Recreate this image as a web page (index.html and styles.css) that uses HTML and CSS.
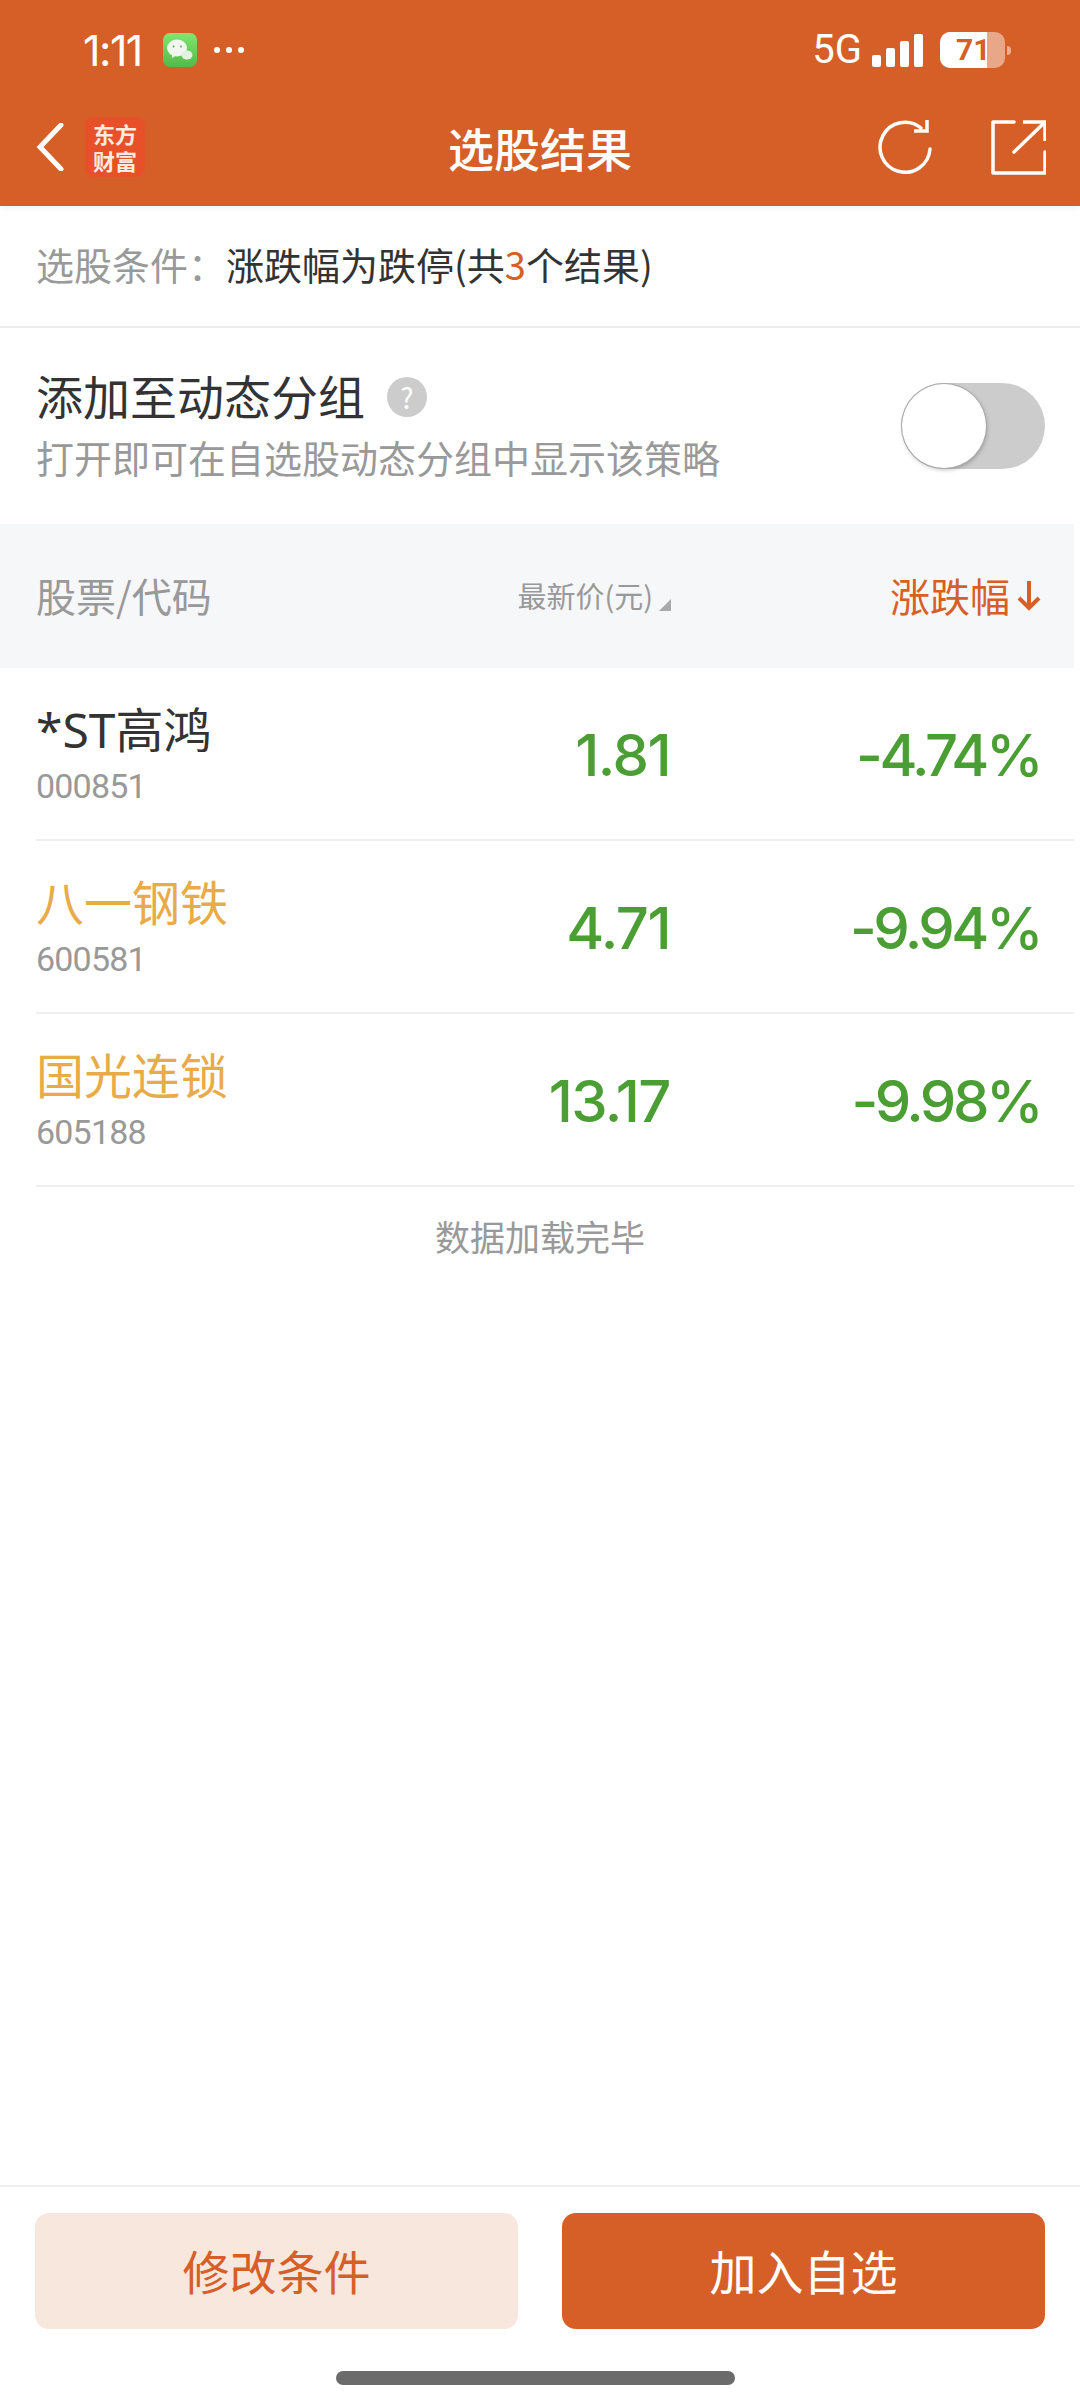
FILE: index.html
```html
<!DOCTYPE html>
<html lang="zh-CN">
<head>
<meta charset="utf-8">
<title>选股结果</title>
<link rel="stylesheet" href="styles.css">
</head>
<body>
<div class="app">
  <header class="header">
    <div class="status">
      <div class="status-left">
        <span class="time">1:11</span>
        <span class="wechat">
          <svg viewBox="0 0 34 34" width="34" height="34"><defs><linearGradient id="wg" x1="0" y1="0" x2="0" y2="1"><stop offset="0" stop-color="#7fe86f"/><stop offset="1" stop-color="#55b848"/></linearGradient></defs><rect width="34" height="34" rx="7" fill="url(#wg)"/><ellipse cx="14" cy="15" rx="10" ry="8.500" fill="#f1f6ee"/><path d="M9 21l0 4 5-3z" fill="#f1f6ee"/><ellipse cx="24" cy="22" rx="5.500" ry="4.600" fill="#e6f0e2"/><circle cx="10.500" cy="13.500" r="1" fill="#5aa850"/><circle cx="18" cy="13.500" r="1" fill="#5aa850"/></svg>
        </span>
        <span class="dots"><i></i><i></i><i></i></span>
      </div>
      <div class="status-right">
        <span class="net">5G</span>
        <span class="signal"><i class="s1"></i><i class="s2"></i><i class="s3"></i><i class="s4"></i></span>
        <span class="battery"><span class="battery-fill"></span><span class="battery-num">71</span></span>
        <span class="battery-tip"></span>
      </div>
    </div>
    <nav class="nav">
      <div class="nav-left">
        <svg class="back" viewBox="0 0 28 48" width="28" height="48"><path d="M25 2 L4 24 L25 46" fill="none" stroke="#fff" stroke-width="5" stroke-linecap="round" stroke-linejoin="miter"/></svg>
        <div class="logo"><span>东方</span><span>财富</span></div>
      </div>
      <h1 class="title">选股结果</h1>
      <div class="nav-right">
        <svg viewBox="0 0 56 56" width="56" height="56"><path d="M53 30 A25 25 0 1 1 44 9" fill="none" stroke="#fff" stroke-width="3.500" stroke-linecap="round"/><path d="M50 1 V12 H37" fill="none" stroke="#fff" stroke-width="3.500"/></svg>
        <svg viewBox="0 0 56 56" width="56" height="56"><path d="M24 3 H3 V54 H55 V33" fill="none" stroke="#fff" stroke-width="3.500" stroke-linejoin="round" stroke-linecap="round"/><path d="M33 3 H55 V22" fill="none" stroke="#fff" stroke-width="3.500"/><path d="M54 4 L24 33" fill="none" stroke="#fff" stroke-width="3.500" stroke-linecap="round"/></svg>
      </div>
    </nav>
  </header>

  <section class="cond">
    <span class="cond-label">选股条件：</span><span class="cond-text">涨跌幅为跌停(共<em>3</em>个结果)</span>
  </section>

  <section class="group">
    <div class="group-info">
      <div class="group-title"><span>添加至动态分组</span><span class="help">?</span></div>
      <div class="group-sub">打开即可在自选股动态分组中显示该策略</div>
    </div>
    <div class="switch"><span class="knob"></span></div>
  </section>

  <div class="thead">
    <span class="c-name">股票/代码</span>
    <span class="c-price">最新价(元)<i class="corner"></i></span>
    <span class="c-chg">涨跌幅<svg viewBox="0 0 26 32" width="26" height="32"><path d="M13 2 V29 M3 19 L13 29 L23 19" fill="none" stroke="#d65f28" stroke-width="4"/></svg></span>
  </div>

  <main class="list">
    <div class="row">
      <div class="c-name"><div class="name">*ST高鸿</div><div class="code">000851</div></div>
      <div class="c-price num">1.81</div>
      <div class="c-chg num">-4.74%</div>
    </div>
    <div class="row">
      <div class="c-name"><div class="name hl">八一钢铁</div><div class="code">600581</div></div>
      <div class="c-price num">4.71</div>
      <div class="c-chg num">-9.94%</div>
    </div>
    <div class="row">
      <div class="c-name"><div class="name hl">国光连锁</div><div class="code">605188</div></div>
      <div class="c-price num">13.17</div>
      <div class="c-chg num">-9.98%</div>
    </div>
    <div class="done">数据加载完毕</div>
  </main>

  <footer class="footer">
    <div class="btns">
      <button class="btn btn-light">修改条件</button>
      <button class="btn btn-main">加入自选</button>
    </div>
    <div class="home"></div>
  </footer>
</div>
</body>
</html>
```
FILE: styles.css
```css
* { box-sizing: border-box; margin: 0; padding: 0; }
html, body { width: 1080px; height: 2400px; background: #fff; overflow: hidden; }
body { font-family: "Noto Sans CJK SC", "Noto Sans", sans-serif; }
.app { width: 1080px; height: 2400px; display: flex; flex-direction: column; }

.header { height: 206px; background: #d65f28; color: #fff; flex: none; box-shadow: 0 2px 6px rgba(0,0,0,.06); position: relative; }
.status { height: 100px; display: flex; justify-content: space-between; align-items: center; padding: 0 69px 0 83px; }
.status-left, .status-right { display: flex; align-items: center; }
.time { font: 400 43px/1 "Inter", sans-serif; width: 80px; letter-spacing: -1.5px; }
.wechat { height: 34px; display: block; }
.wechat svg { display: block; }
.dots { display: flex; gap: 6px; margin-left: 17px; }
.dots i { width: 6px; height: 6px; border-radius: 50%; background: #fff; display: block; }
.net { font: 400 40px/1 "Roboto", sans-serif; }
.signal { display: flex; align-items: flex-end; gap: 5px; margin-left: 10px; height: 33px; }
.signal i { width: 9px; background: #fff; border-radius: 2px; display: block; }
.s1 { height: 12px; } .s2 { height: 19px; } .s3 { height: 26px; } .s4 { height: 33px; }
.battery { width: 65px; height: 36px; margin-left: 17px; border-radius: 10px; background: rgba(255,255,255,.45); position: relative; overflow: hidden; display: block; }
.battery-fill { position: absolute; left: 0; top: 0; bottom: 0; width: 47px; background: #fff; }
.battery-num { position: absolute; left: 16px; top: 0; font: 700 30px/36px "Roboto", sans-serif; color: #d65f28; }
.battery-tip { width: 4px; height: 9px; margin-left: 2px; background: rgba(255,255,255,.5); border-radius: 0 4px 4px 0; }

.nav { height: 106px; display: grid; grid-template-columns: 1fr auto 1fr; align-items: center; padding: 0 34px 12px 34px; }
.nav-left { display: flex; align-items: center; gap: 21px; padding-left: 2px; }
.back { display: block; }
.logo { width: 60px; height: 60px; background: #e8502a; border-radius: 9px; display: flex; flex-direction: column; align-items: center; justify-content: center; font-size: 22px; line-height: 27px; font-weight: 700; color: #ffeadf; }
.title { font-size: 46px; font-weight: 500; line-height: 1; }
.nav-right { display: flex; justify-content: flex-end; gap: 57px; }
.nav-right svg { display: block; }

.cond { height: 122px; border-bottom: 2px solid #ececec; padding: 0 36px 5px; display: flex; align-items: center; font-size: 38px; flex: none; }
.cond-label { color: #999; width: 190px; }
.cond-text { color: #333; }
.cond-text em { font-style: normal; color: #d65f28; }

.group { height: 196px; flex: none; padding: 0 35px 0 36px; display: flex; align-items: center; justify-content: space-between; }
.group-title { display: flex; align-items: center; font-size: 47px; line-height: 60px; color: #333; }
.group-title span:first-child { margin-top: -5px; }
.help { width: 40px; height: 40px; margin-left: 22px; border-radius: 50%; background: #ccc; color: #fff; font-size: 28px; line-height: 40px; text-align: center; display: block; }
.group-sub { font-size: 38px; line-height: 52px; color: #999; margin-top: 6px; }
.switch { width: 144px; height: 86px; background: #ccc; border-radius: 43px; position: relative; }
.knob { position: absolute; left: 1px; top: 1px; width: 84px; height: 84px; background: #fff; border-radius: 50%; box-shadow: 0 0 0 1px #aaa, 1px 2px 4px rgba(0,0,0,.25); }

.thead { height: 144px; width: 1074px; flex: none; background: #f6f7f9; display: flex; align-items: center; padding: 0 32px 3px 36px; font-size: 40px; color: #999; }
.thead .c-price { font-size: 29px; position: relative; justify-content: flex-end; padding-right: 18px; width: 305px; }
.corner { position: absolute; right: 0; bottom: 5px; width: 0; height: 0; border-style: solid; border-width: 0 0 12px 12px; border-color: transparent transparent #aaa transparent; }
.thead .c-chg { color: #d65f28; justify-content: flex-end; gap: 6px; }
.c-name { width: 330px; flex: none; }
.c-price { width: 304px; flex: none; display: flex; justify-content: flex-end; align-items: center; }
.c-chg { flex: 1; display: flex; justify-content: flex-end; align-items: center; }

.list { flex: 1; }
.row { height: 173px; width: 1074px; display: flex; align-items: center; padding: 0 34px 0 36px; position: relative; }
.row::after { content: ""; position: absolute; left: 36px; right: 0; bottom: 0; height: 2px; background: #efefef; }
.name { font-size: 48px; line-height: 60px; color: #333; margin-top: -3px; font-family: "Noto Sans", "Noto Sans CJK SC", sans-serif; }
.name.hl { color: #e8ab47; }
.code { font: 400 34px/40px "Roboto", sans-serif; color: #999; margin-top: 6px; letter-spacing: -0.8px; }
.num { font: 500 58px/1 "Inter", sans-serif; color: #4a9e33; letter-spacing: -1.5px; }
.c-chg.num { letter-spacing: -3.5px; }
.done { text-align: center; font-size: 35px; color: #999; line-height: 50px; margin-top: 24px; }

.footer { height: 215px; flex: none; border-top: 2px solid #eee; padding: 26px 35px 0; }
.btns { display: flex; justify-content: space-between; }
.btn { width: 483px; height: 116px; border: none; border-radius: 14px; font-family: inherit; font-size: 47px; padding-bottom: 4px; }
.btn-light { background: #f8e7dd; color: #d65f28; }
.btn-main { background: #d65f28; color: #fff; }
.home { width: 399px; height: 14px; border-radius: 7px; background: #6b6b6b; margin: 42px 0 0 301px; }
```
